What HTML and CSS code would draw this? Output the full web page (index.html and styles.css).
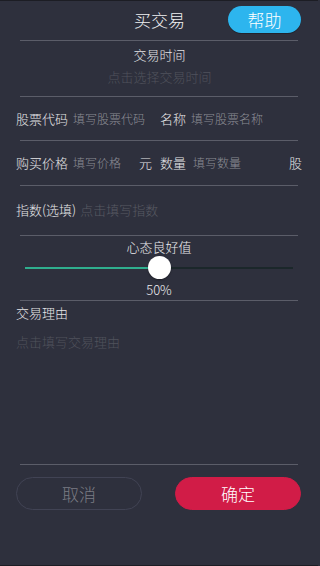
FILE: index.html
```html
<!DOCTYPE html>
<html lang="zh">
<head>
<meta charset="utf-8">
<link rel="stylesheet" href="styles.css">
</head>
<body>
<div class="page">
  <header class="header">
    <span></span>
    <h1 class="title">买交易</h1>
    <div class="help-wrap"><button class="help">帮助</button></div>
  </header>
  <div class="divider"></div>
  <section class="time">
    <div class="time-label">交易时间</div>
    <div class="time-ph">点击选择交易时间</div>
  </section>
  <div class="divider"></div>
  <div class="row r1">
    <span class="label">股票代码</span><span class="ph code-ph">填写股票代码</span>
    <span class="label">名称</span><span class="ph">填写股票名称</span>
  </div>
  <div class="divider"></div>
  <div class="row r2">
    <span class="label">购买价格</span><span class="ph price-ph">填写价格</span><span class="label unit">元</span>
    <span class="label">数量</span><span class="ph qty-ph">填写数量</span><span class="label">股</span>
  </div>
  <div class="divider"></div>
  <div class="row r3">
    <span class="label">指数(选填)</span><span class="ph dark">点击填写指数</span>
  </div>
  <div class="divider"></div>
  <section class="mood">
    <div class="mood-label">心态良好值</div>
    <div class="slider">
      <div class="track"><div class="fill" style="width:50%"></div></div>
      <div class="thumb" style="left:50%"></div>
    </div>
    <div class="pct">50%</div>
  </section>
  <div class="divider"></div>
  <section class="reason">
    <div class="reason-label">交易理由</div>
    <div class="reason-ph">点击填写交易理由</div>
  </section>
  <div class="divider"></div>
  <div class="actions">
    <button class="btn cancel">取消</button>
    <button class="btn ok">确定</button>
  </div>
</div>
</body>
</html>
```
FILE: styles.css
```css
* { box-sizing: border-box; }
html, body { margin: 0; padding: 0; }
body {
  background: #2e303d;
  font-family: "Noto Sans CJK SC", "Noto Sans", sans-serif;
  font-weight: 300;
  color: #e8e8ea;
  width: 318px;
  height: 566px;
  overflow: hidden;
}
.page {
  height: 566px;
  border-top: 1px solid #1c1d24;
  border-bottom: 1px solid #1c1d24;
  display: flex;
  flex-direction: column;
}
.header {
  height: 39px;
  display: grid;
  grid-template-columns: 1fr auto 1fr;
  align-items: center;
}
.title {
  margin: 0;
  font-size: 17px;
  font-weight: 300;
  color: #f0f0f2;
  line-height: 20px;
  padding-left: 1px;
  padding-bottom: 2px;
}
.help-wrap {
  display: flex;
  justify-content: flex-end;
  padding-right: 17px;
  padding-bottom: 2px;
}
.help {
  width: 73px;
  height: 27px;
  border: none;
  border-radius: 14px;
  background: #2db5ee;
  color: #ffffff;
  font-family: inherit;
  font-weight: 300;
  font-size: 17px;
  line-height: 27px;
  padding: 0;
  box-shadow: 0 1px 0 #22232c;
}
.divider {
  height: 1px;
  margin: 0 20px;
  background: #5b5d69;
  flex: none;
}
.time {
  height: 55px;
  display: flex;
  flex-direction: column;
  align-items: center;
  padding-top: 5px;
  padding-left: 1px;
}
.time-label { font-size: 13px; line-height: 17px; color: #e4e4e6; }
.time-ph { font-size: 13px; line-height: 17px; margin-top: 5px; color: #50525c; }
.row {
  display: flex;
  align-items: center;
  padding: 0 16px;
  font-size: 13px;
  white-space: nowrap;
}
.r1 { height: 43px; padding-bottom: 1px; }
.r2 { height: 44px; padding-bottom: 1px; }
.r3 { height: 49px; padding-bottom: 3px; }
.label { color: #e6e6e8; font-size: 13px; }
.ph { font-size: 12px; color: #8c8d95; margin-left: 5px; }
.code-ph { width: 87px; }
.price-ph { width: 66px; }
.unit { width: 21px; }
.qty-ph { flex: 1; margin-left: 7px; }
.ph.dark { color: #585a63; font-size: 13px; margin-left: 4px; }
.mood {
  height: 64px;
  display: flex;
  flex-direction: column;
  align-items: center;
  padding-top: 2px;
}
.mood-label { font-size: 13px; line-height: 17px; color: #ececee; }
.slider {
  position: relative;
  width: 268px;
  height: 23px;
  margin-top: 1px;
}
.track {
  position: absolute;
  left: 0; right: 0;
  top: 11px;
  height: 2px;
  background: #1b272a;
}
.fill { height: 2px; background: #2fae8e; }
.thumb {
  position: absolute;
  top: 0;
  width: 23px;
  height: 23px;
  margin-left: -11px;
  border-radius: 50%;
  background: #ffffff;
  box-shadow: 0 1px 2px rgba(0,0,0,0.35);
}
.pct { font-size: 13px; line-height: 17px; color: #eeeef0; margin-top: 2px; }
.reason {
  height: 163px;
  padding: 3px 16px 0;
}
.reason-label { font-size: 13px; line-height: 17px; color: #e6e6e8; }
.reason-ph { font-size: 13px; line-height: 17px; color: #50525c; margin-top: 12px; }
.actions {
  display: flex;
  justify-content: space-between;
  padding: 12px 17px 0 16px;
}
.btn {
  width: 126px;
  height: 33px;
  border-radius: 17px;
  font-family: inherit;
  font-weight: 300;
  font-size: 17px;
  padding: 0;
  line-height: 31px;
}
.cancel {
  background: transparent;
  border: 1px solid #414354;
  color: #7b7c84;
}
.ok {
  background: #d11c47;
  border: 1px solid #d11c47;
  color: #ffffff;
}
```
